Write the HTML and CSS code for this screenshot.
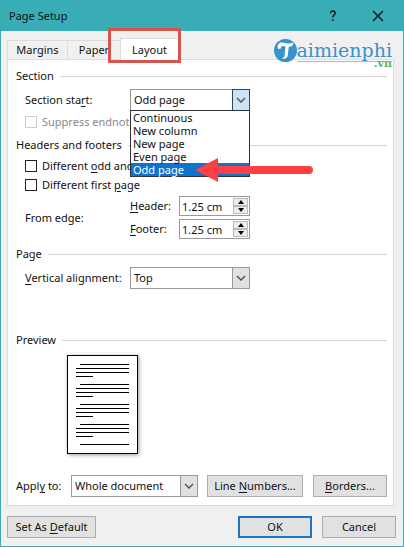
FILE: index.html
```html
<!DOCTYPE html>
<html lang="en">
<head>
    <meta charset="UTF-8">
    <meta name="viewport" content="width=device-width, initial-scale=1.0">
    <title>Page Setup</title>
    <link rel="stylesheet" href="styles.css">
</head>
<body>
    <form class="dialog">
        <header class="titlebar">
            <h1>Page Setup</h1>
            <button class="title-btn" type="button" aria-label="Help">
                <svg width="8" height="12" viewBox="0 0 8 12"><path d="M1.5 3.2C1.5 1.6 2.6 1 3.8 1c1.400 0 2.400.8 2.400 2.100 0 1.900-2.400 2-2.400 4.400M3.800 9.300v1.700" /></svg>
            </button>
            <button class="title-btn" type="button" aria-label="Close">
                <svg width="12" height="12" viewBox="0 0 12 12"><path d="M1 1l10 10M11 1L1 11" /></svg>
            </button>
        </header>

        <nav class="tabs">
            <button class="tab tab-margins" type="button">Margins</button>
            <button class="tab" type="button">Paper</button>
            <button class="tab active" type="button">Layout<span class="highlight"></span></button>
            <div class="logo">
                <svg class="logo-mark" width="23" height="23" viewBox="0 0 23 23">
                    <circle cx="11.500" cy="11.500" r="11.500" fill="#3693cb" />
                    <path d="M4 10C2.800 5 5.500 2.600 9 3.600c3.200.9 6.400 1.800 10.400-.4-.1 3.400-1.900 4.900-4.600 4.600l-1 8.400c-.4 3.200-2.900 4.400-6.200 2.900 2.100-.2 2.800-1.100 3-2.800L11.500 7.500C8.500 6.600 6.700 6.800 7 9.600z" fill="#fff" />
                </svg>
                <span class="logo-name">aimienphi</span>
                <span class="logo-tld">.vn</span>
            </div>
        </nav>

        <main class="panel">
            <h2>Section</h2>
            <div class="row select-row">
                <label for="start">Section sta<u>r</u>t:</label>
                <div class="combo open">
                    <select id="start">
                        <option>Odd page</option>
                    </select>
                    <span class="drop"><svg width="10" height="6" viewBox="0 0 10 6"><path d="M1 1l4 4 4-4" /></svg></span>
                    <ul class="list">
                        <li>Continuous</li>
                        <li>New column</li>
                        <li>New page</li>
                        <li>Even page</li>
                        <li class="selected">Odd page</li>
                    </ul>
                    <svg class="arrow" width="118" height="24" viewBox="0 0 118 24"><path d="M0 12L23 0v8h91a4 4 0 0 1 0 8H23v8z" fill="#fb4144" /></svg>
                </div>
            </div>
            <label class="check disabled"><input type="checkbox" disabled>Suppress endnotes</label>

            <h2 class="headers-title">Headers and footers</h2>
            <div class="checks">
                <label class="check"><input type="checkbox"><span>Different <u>o</u>dd and even</span></label>
                <label class="check"><input type="checkbox"><span>Different first <u>p</u>age</span></label>
            </div>
            <div class="row edge">
                <span>From edge:</span>
                <div class="edge-fields">
                    <label for="header"><u>H</u>eader:</label>
                    <div class="spin">
                        <input id="header" type="text" value="1.25 cm">
                        <button type="button" aria-label="Header up"><svg width="6" height="4" viewBox="0 0 6 4"><path d="M3 0l3 4H0z" /></svg></button>
                        <button type="button" aria-label="Header down"><svg width="6" height="4" viewBox="0 0 6 4"><path d="M3 4l3-4H0z" /></svg></button>
                    </div>
                    <label for="footer"><u>F</u>ooter:</label>
                    <div class="spin">
                        <input id="footer" type="text" value="1.25 cm">
                        <button type="button" aria-label="Footer up"><svg width="6" height="4" viewBox="0 0 6 4"><path d="M3 0l3 4H0z" /></svg></button>
                        <button type="button" aria-label="Footer down"><svg width="6" height="4" viewBox="0 0 6 4"><path d="M3 4l3-4H0z" /></svg></button>
                    </div>
                </div>
            </div>

            <h2 class="page-title">Page</h2>
            <div class="row select-row">
                <label for="align"><u>V</u>ertical alignment:</label>
                <div class="combo">
                    <select id="align">
                        <option>Top</option>
                    </select>
                    <span class="drop"><svg width="10" height="6" viewBox="0 0 10 6"><path d="M1 1l4 4 4-4" /></svg></span>
                </div>
            </div>

            <h2 class="preview-title">Preview</h2>
            <svg class="preview" width="71" height="99" viewBox="0 0 71 99">
                <rect x="0.500" y="0.500" width="70" height="98" fill="#fff" stroke="#000" />
                <path d="M13 9.500h49M9 13.500h53M9 17.500h53M9 21.500h17M13 29.500h49M9 33.500h53M9 37.500h53M9 41.500h17M13 49.500h49M9 53.500h53M9 57.500h53M9 61.500h17M13 69.500h49M9 73.500h53M9 77.500h53M9 81.500h17M13 89.500h49" stroke="#000" />
            </svg>

            <div class="apply">
                <label for="apply">Appl<u>y</u> to:</label>
                <div class="combo">
                    <select id="apply">
                        <option>Whole document</option>
                    </select>
                    <span class="drop"><svg width="10" height="6" viewBox="0 0 10 6"><path d="M1 1l4 4 4-4" /></svg></span>
                </div>
                <button class="btn btn-lines" type="button">Line <u>N</u>umbers...</button>
                <button class="btn" type="button"><u>B</u>orders...</button>
            </div>
        </main>

        <footer class="actions">
            <button class="btn btn-default" type="button">Set As <u>D</u>efault</button>
            <button class="btn primary" type="button">OK</button>
            <button class="btn" type="button">Cancel</button>
        </footer>
    </form>
</body>
</html>
```

FILE: styles.css
```css
* { box-sizing: border-box; }
body {
    margin: 0;
    background: #f0f0f0;
    font-family: "Noto Sans", "Open Sans", sans-serif;
    font-size: 11px;
    line-height: 14px;
    color: #111;
}
button, input, select { font: inherit; color: inherit; margin: 0; padding: 0; }
h1, h2 { margin: 0; font-size: 11px; font-weight: normal; }
svg { display: block; }
u { text-underline-offset: 2px; }

.dialog {
    min-height: 100vh;
    border: 1px solid #38adb5;
    border-top: 0;
    background: #f0f0f0;
}
.titlebar {
    display: flex;
    align-items: center;
    height: 31px;
    padding: 0 11px 0 8px;
    background: #38adb5;
}
.titlebar h1 { flex: 1; }
.title-btn {
    display: flex;
    align-items: center;
    justify-content: center;
    width: 28px;
    height: 24px;
    border: 0;
    background: none;
}
.title-btn + .title-btn { margin-left: 17px; }
.title-btn svg { fill: none; stroke: #111; stroke-width: 1.400; }

/* Tabs */
.tabs {
    display: flex;
    align-items: flex-end;
    height: 28px;
    padding: 0 8px 0 6px;
}
.tab {
    width: 53px;
    height: 19px;
    border: 1px solid #dcdcdc;
    border-bottom: 0;
    border-right: 0;
    background: #f0f0f0;
}
.tab-margins { width: 60px; }
.tab.active {
    position: relative;
    width: 58px;
    height: 22px;
    margin-bottom: -1px;
    background: #fff;
    z-index: 1;
}
.highlight {
    position: absolute;
    left: -13px;
    top: -11px;
    width: 73px;
    height: 35px;
    border: 3px solid #d9534f;
}
.logo {
    position: relative;
    display: flex;
    margin-left: auto;
    margin-bottom: -3px;
    padding-right: 3px;
    font-family: "DejaVu Serif", serif;
    color: #3693cb;
    z-index: 1;
}
.logo-name {
    border-bottom: 1px solid #8fc1e0;
    font-size: 19px;
    line-height: 22px;
}
.logo-tld {
    position: absolute;
    right: 3px;
    top: 18px;
    font-size: 11px;
    font-weight: bold;
    color: #50b96c;
}

/* Panel */
.panel {
    margin: 0 9px 0 6px;
    padding: 9px 6px 8px 8px;
    border: 1px solid #dcdcdc;
    background: #fff;
}
.panel h2 {
    display: flex;
    align-items: center;
    gap: 6px;
}
.panel h2::after {
    content: "";
    flex: 1;
    height: 1px;
    background: #d5d5d5;
}
.panel .headers-title { margin-top: 6px; }
.panel .page-title { margin-top: 8px; }
.panel .preview-title { margin-top: 44px; }
.row {
    display: grid;
    grid-template-columns: 105px 1fr;
    align-items: center;
    padding-left: 9px;
}
.select-row { margin-top: 6px; }
.row .combo { width: 120px; }

.combo { position: relative; height: 22px; }
.combo select {
    display: block;
    width: 100%;
    height: 22px;
    padding: 0 20px 0 3px;
    border: 1px solid #999;
    border-radius: 0;
    background: #fff;
    appearance: none;
}
.drop {
    position: absolute;
    top: 0;
    right: 0;
    display: flex;
    align-items: center;
    justify-content: center;
    width: 18px;
    height: 22px;
    border: 1px solid #999;
    background: #e1e1e1;
    pointer-events: none;
}
.drop svg { fill: none; stroke: #555; stroke-width: 1.500; }
.open .drop { border-color: #264a66; background: #cce4f7; }
.list {
    position: absolute;
    top: 21px;
    left: 0;
    right: 0;
    margin: 0;
    padding: 0;
    border: 1px solid #333;
    background: #fff;
    list-style: none;
    line-height: 13px;
    z-index: 2;
}
.list li { padding: 0 2px; }
.list .selected { background: #0f74cf; color: #fff; }
.arrow { position: absolute; left: 65px; top: 69px; z-index: 3; }

.check {
    display: flex;
    align-items: center;
    gap: 5px;
    height: 19px;
    padding-left: 9px;
}
.check input {
    width: 12px;
    height: 12px;
    border: 1px solid #222;
    background: #fff;
    appearance: none;
}
.check input:checked { background: #0f74cf; }
.disabled { height: 20px; margin-top: 1px; color: #888; }
.disabled input { border-color: #ccc; }
.checks { margin-top: 4px; }

.edge { margin-top: 2px; }
.edge-fields {
    display: grid;
    grid-template-columns: 49px 71px;
    align-items: center;
    row-gap: 3px;
}
.spin {
    display: grid;
    grid-template-columns: 1fr 15px;
    grid-template-rows: 8px 8px;
    height: 20px;
    padding: 1px;
    border: 1px solid #999;
}
.spin input {
    grid-row: span 2;
    width: 100%;
    height: 16px;
    padding-left: 1px;
    border: 0;
    outline: 0;
}
.spin button {
    display: flex;
    align-items: center;
    justify-content: center;
    border: 1px solid #bbb;
    background: #ececec;
}

.preview {
    margin: 8px 0 0 51px;
    box-shadow: 1px 1px 4px #999;
}
.apply {
    display: flex;
    align-items: center;
    margin-top: 21px;
}
.apply label { width: 55px; }
.apply .combo { flex: 1; margin-right: 9px; }
.btn {
    width: 74px;
    height: 22px;
    border: 1px solid #adadad;
    background: #e1e1e1;
}
.btn-lines { width: 96px; margin-right: 10px; }
.btn-default { width: 89px; margin-right: auto; }
.btn.primary { border: 2px solid #1a75c2; }
.actions {
    display: flex;
    gap: 10px;
    padding: 10px 7px 8px 6px;
}
```
